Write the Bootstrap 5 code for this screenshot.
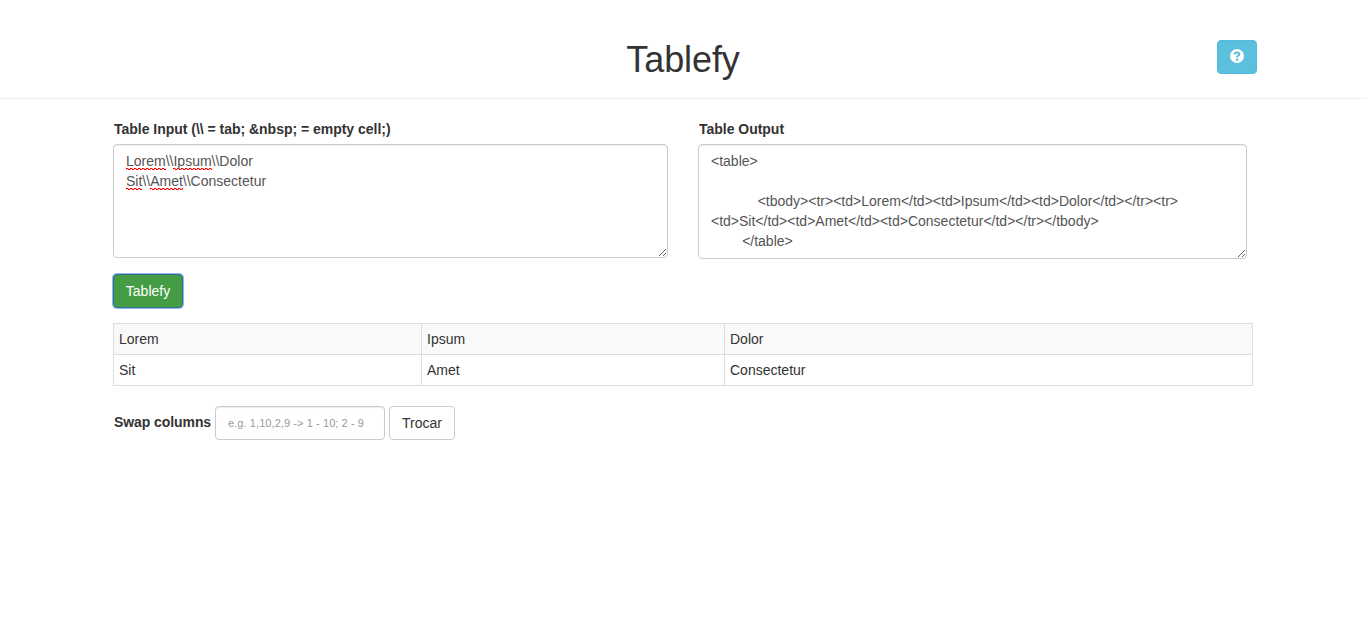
<!DOCTYPE html>
<html lang="en">
<head>
<meta charset="utf-8">
<meta name="viewport" content="width=device-width, initial-scale=1">
<title>Tablefy</title>
<link href="https://cdn.jsdelivr.net/npm/bootstrap@5.3.0/dist/css/bootstrap.min.css" rel="stylesheet">
<style>
  body { font-family: "Liberation Sans", Arial, sans-serif; font-size: 14px; line-height: 20px; color: #333; }
  .page-head { height: 99px; border-bottom: 1px solid #eee; padding-top: 40px; }
  .page-head h1 { font-size: 36px; line-height: 40px; font-weight: 400; letter-spacing: -.1px; }
  .page-main { width: 1140px; }
  .help-slot { top: 40px; right: 109px; }
  .btn { font-size: 14px; line-height: 20px; padding: 6px 12px; border-radius: 4px; }
  .btn-help { background: #5bc0de; border-color: #53bcdc; color: #fff; height: 34px; width: 40px; }
  .btn-help svg { display: block; margin-bottom: 2px; }
  .btn-run { background: #449d44; border-color: #31708a; color: #fff; width: 70px; height: 34px; padding: 6px 0; box-shadow: 0 0 0 1px #8fb8f5; }
  .btn-plain { background: #fff; border-color: #ccc; color: #333; width: 66px; height: 34px; padding: 6px 0; }
  .form-label { line-height: 20px; margin: 0 0 5px 1px; letter-spacing: -.02px; }
  .form-control, .form-control:focus { font-size: 14px; line-height: 20px; color: #555; padding: 6px 12px; border: 1px solid #ccc; border-radius: 4px; box-shadow: inset 0 1px 1px rgba(0,0,0,.075); }
  .editors { gap: 30px; padding-top: 20px; }
  .editor { white-space: pre-wrap; resize: both; overflow: hidden; }
  .editor-in { width: 555px; height: 114px; }
  .editor-out { width: 549px; height: 115px; }
  .misspelt { padding-bottom: 1px; background: url("data:image/svg+xml,%3Csvg xmlns='http://www.w3.org/2000/svg' width='4' height='3' shape-rendering='crispEdges'%3E%3Cpath d='M0 1h2v1H0zM2 2h2v1H2z' fill='red'/%3E%3Cpath d='M0 2h1v1H0zM2 1h1v1H2z' fill='red' opacity='.4'/%3E%3C/svg%3E") repeat-x left bottom; }
  .result { --bs-table-striped-bg: #f9f9f9; --bs-table-striped-color: #333; color: #333; border-color: #ddd; table-layout: fixed; margin-bottom: 20px; }
  .result td { padding: 5px; line-height: 20px; }
  .result .c1 { width: 308px; }
  .result .c2 { width: 303px; }
  .actions { padding: 15px 0; }
  .swap-label { width: 97px; margin: -2px 0 0 1px; letter-spacing: -.08px; }
  .form-control.swap-input { width: 170px; height: 34px; }
  .swap-input::placeholder { color: #999; font-size: 11px; letter-spacing: .08px; opacity: 1; line-height: 18px; transform: translateY(-1px); }
</style>
</head>
<body>
<header class="page-head position-relative text-center">
  <h1 class="m-0">Tablefy</h1>
  <div class="help-slot position-absolute">
    <button type="button" class="btn btn-help" aria-label="Help">
      <svg width="14" height="14" viewBox="0 0 14 14"><circle cx="7" cy="7" r="7" fill="#fff"/><path d="M4.5 5.5Q4.5 3.6 7 3.6Q9.3 3.6 9.3 5.3Q9.3 6.3 8 6.9Q7.1 7.3 7.1 8.5" fill="none" stroke="#5bc0de" stroke-width="2"/><path d="M6 9.5h2.2v2.2h-2.2z" fill="#5bc0de"/></svg>
    </button>
  </div>
</header>
<main class="page-main mx-auto">
  <div class="editors d-flex align-items-start">
    <div>
      <label class="form-label fw-bold d-block">Table Input (\\ = tab; &amp;nbsp; = empty cell;)</label>
      <div class="form-control editor editor-in" role="textbox" aria-multiline="true"><span class="misspelt">Lorem</span>\\<span class="misspelt">Ipsum</span>\\Dolor
<span class="misspelt">Sit</span>\\<span class="misspelt">Amet</span>\\Consectetur</div>
    </div>
    <div>
      <label class="form-label fw-bold d-block">Table Output</label>
      <div class="form-control editor editor-out" role="textbox" aria-multiline="true">&lt;table&gt;

            &lt;tbody&gt;&lt;tr&gt;&lt;td&gt;Lorem&lt;/td&gt;&lt;td&gt;Ipsum&lt;/td&gt;&lt;td&gt;Dolor&lt;/td&gt;&lt;/tr&gt;&lt;tr&gt;
&lt;td&gt;Sit&lt;/td&gt;&lt;td&gt;Amet&lt;/td&gt;&lt;td&gt;Consectetur&lt;/td&gt;&lt;/tr&gt;&lt;/tbody&gt;
        &lt;/table&gt;</div>
    </div>
  </div>
  <div class="actions"><button type="button" class="btn btn-run d-block">Tablefy</button></div>
  <table class="table table-bordered table-striped result">
    <colgroup><col class="c1"><col class="c2"><col></colgroup>
    <tbody>
      <tr><td>Lorem</td><td>Ipsum</td><td>Dolor</td></tr>
      <tr><td>Sit</td><td>Amet</td><td>Consectetur</td></tr>
    </tbody>
  </table>
  <form class="d-flex align-items-center gap-1">
    <label class="swap-label fw-bold text-nowrap" for="swap">Swap columns</label>
    <input id="swap" type="text" class="form-control swap-input" placeholder="e.g. 1,10,2,9 -&gt; 1 - 10; 2 - 9">
    <button type="button" class="btn btn-plain">Trocar</button>
  </form>
</main>
<script src="https://cdn.jsdelivr.net/npm/bootstrap@5.3.0/dist/js/bootstrap.bundle.min.js"></script>
</body>
</html>
